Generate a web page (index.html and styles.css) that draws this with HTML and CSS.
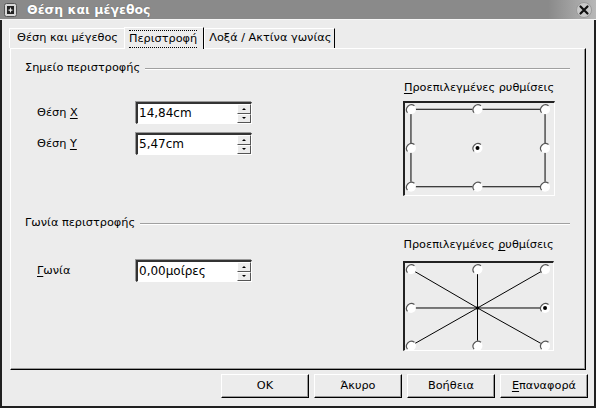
FILE: index.html
```html
<!DOCTYPE html>
<html lang="el">
<head>
<meta charset="utf-8">
<title>Θέση και μέγεθος</title>
<link rel="stylesheet" href="styles.css">
</head>
<body>
<div class="window">
  <div class="titlebar">
    <span class="app-icon"><svg width="13" height="14" viewBox="0 0 13 14"><rect x="0.5" y="0.5" width="12" height="13" rx="2" fill="#d8d8d8" stroke="#555"/><rect x="3" y="3" width="7" height="8" fill="#222"/><path d="M6.5 4 L7.3 6.5 L9.5 7 L7.3 7.7 L6.5 10 L5.7 7.7 L3.5 7 L5.7 6.5 Z" fill="#eee"/></svg></span>
    <span class="title">Θέση και μέγεθος</span>
    <span class="close"><svg width="18" height="18" viewBox="0 0 18 18"><circle cx="9" cy="9" r="7.5" fill="#c9c9c9" stroke="#9a9a9a"/><path d="M5.5 5.5 L12.5 12.5 M12.5 5.5 L5.5 12.5" stroke="#111" stroke-width="2.2" stroke-linecap="round"/></svg></span>
  </div>

  <div class="tabs">
    <div class="tab first">Θέση και μέγεθος</div>
    <div class="tab active"><span class="focus">Περιστροφή</span></div>
    <div class="tab last">Λοξά / Ακτίνα γωνίας</div>
  </div>

  <div class="panel">
    <div class="section-head first-head"><span>Σημείο περιστροφής</span><i class="rule"></i></div>
    <div class="section-row row1">
      <div class="fields">
        <div class="field">
          <span class="label">Θέση <u>X</u></span>
          <span class="spin"><span class="value">14,84cm</span><span class="arrows"><b class="up"></b><b class="down"></b></span></span>
        </div>
        <div class="field">
          <span class="label">Θέση <u>Y</u></span>
          <span class="spin"><span class="value">5,47cm</span><span class="arrows"><b class="up"></b><b class="down"></b></span></span>
        </div>
      </div>
      <div class="preset">
        <div class="preset-label"><u>Π</u>ροεπιλεγμένες ρυθμίσεις</div>
        <div class="ctl ctl1">
          <svg width="150" height="93" viewBox="0 0 150 93">
            <path d="M6 6 H141 V84 H6 Z" fill="none" stroke="#000"/>
            <g class="radio"><circle cx="6" cy="6" r="5"/><path d="M2.5 9.5 A5 5 0 0 1 9.5 2.5"/></g>
            <g class="radio"><circle cx="73" cy="6" r="5"/><path d="M69.5 9.5 A5 5 0 0 1 76.5 2.5"/></g>
            <g class="radio"><circle cx="141" cy="6" r="5"/><path d="M137.5 9.5 A5 5 0 0 1 144.5 2.5"/></g>
            <g class="radio"><circle cx="6" cy="45" r="5"/><path d="M2.5 48.5 A5 5 0 0 1 9.5 41.5"/></g>
            <g class="radio"><circle cx="73" cy="45" r="5"/><path d="M69.5 48.5 A5 5 0 0 1 76.5 41.5"/><circle class="dot" cx="73" cy="45" r="2"/></g>
            <g class="radio"><circle cx="141" cy="45" r="5"/><path d="M137.5 48.5 A5 5 0 0 1 144.5 41.5"/></g>
            <g class="radio"><circle cx="6" cy="84" r="5"/><path d="M2.5 87.5 A5 5 0 0 1 9.5 80.5"/></g>
            <g class="radio"><circle cx="73" cy="84" r="5"/><path d="M69.5 87.5 A5 5 0 0 1 76.5 80.5"/></g>
            <g class="radio"><circle cx="141" cy="84" r="5"/><path d="M137.5 87.5 A5 5 0 0 1 144.5 80.5"/></g>
          </svg>
        </div>
      </div>
    </div>

    <div class="section-head second-head"><span>Γωνία περιστροφής</span><i class="rule"></i></div>
    <div class="section-row row2">
      <div class="fields">
        <div class="field">
          <span class="label"><u>Γ</u>ωνία</span>
          <span class="spin"><span class="value">0,00μοίρες</span><span class="arrows"><b class="up"></b><b class="down"></b></span></span>
        </div>
      </div>
      <div class="preset">
        <div class="preset-label">Προεπιλεγμένες <u>ρ</u>υθμίσεις</div>
        <div class="ctl ctl2">
          <svg width="149" height="88" viewBox="0 0 149 88">
            <g stroke="#000" stroke-width="1">
              <line x1="73" y1="45" x2="6" y2="6"/>
              <line x1="73" y1="45" x2="73" y2="6"/>
              <line x1="73" y1="45" x2="141" y2="6"/>
              <line x1="73" y1="45" x2="6" y2="45"/>
              <line x1="73" y1="45" x2="141" y2="45"/>
              <line x1="73" y1="45" x2="6" y2="83"/>
              <line x1="73" y1="45" x2="73" y2="83"/>
              <line x1="73" y1="45" x2="141" y2="83"/>
            </g>
            <circle cx="73" cy="45" r="1.8" fill="#000"/>
            <g class="radio"><circle cx="6" cy="6" r="5"/><path d="M2.5 9.5 A5 5 0 0 1 9.5 2.5"/></g>
            <g class="radio"><circle cx="73" cy="6" r="5"/><path d="M69.5 9.5 A5 5 0 0 1 76.5 2.5"/></g>
            <g class="radio"><circle cx="141" cy="6" r="5"/><path d="M137.5 9.5 A5 5 0 0 1 144.5 2.5"/></g>
            <g class="radio"><circle cx="6" cy="45" r="5"/><path d="M2.5 48.5 A5 5 0 0 1 9.5 41.5"/></g>
            <g class="radio"><circle cx="141" cy="45" r="5"/><path d="M137.5 48.5 A5 5 0 0 1 144.5 41.5"/><circle class="dot" cx="141" cy="45" r="2"/></g>
            <g class="radio"><circle cx="6" cy="83" r="5"/><path d="M2.5 86.5 A5 5 0 0 1 9.5 79.5"/></g>
            <g class="radio"><circle cx="73" cy="83" r="5"/><path d="M69.5 86.5 A5 5 0 0 1 76.5 79.5"/></g>
            <g class="radio"><circle cx="141" cy="83" r="5"/><path d="M137.5 86.5 A5 5 0 0 1 144.5 79.5"/></g>
          </svg>
        </div>
      </div>
    </div>
  </div>

  <div class="buttons">
    <button class="btn">OK</button>
    <button class="btn">Άκυρο</button>
    <button class="btn">Βοήθεια</button>
    <button class="btn"><u>Ε</u>παναφορά</button>
  </div>
</div>
</body>
</html>
```

FILE: styles.css
```css
* { box-sizing: border-box; }

html, body {
  margin: 0;
  padding: 0;
  width: 596px;
  height: 408px;
  overflow: hidden;
  background: #ececec;
}

body {
  font-family: "DejaVu Sans", "Liberation Sans", sans-serif;
  font-size: 11.3px;
  line-height: 14px;
  color: #000;
}

u { text-decoration: underline; text-underline-offset: 2px; }

.window {
  width: 596px;
  height: 408px;
  border-left: 2px solid #202020;
  border-right: 2px solid #202020;
  border-bottom: 2px solid #202020;
  display: flex;
  flex-direction: column;
  background: #ececec;
}

.titlebar {
  height: 20px;
  margin: 0 -2px;
  background: linear-gradient(to right, #8a8a8a 0, #8a8a8a 92%, #b8b8b8 100%);
  border-bottom: 1px solid #f6f6f6;
  display: flex;
  align-items: center;
  padding-left: 4px;
  padding-right: 3px;
}

.app-icon { display: flex; width: 14px; height: 14px; }

.title {
  margin-left: 9px;
  font-size: 12.5px;
  font-weight: bold;
  color: #fff;
  text-shadow: 0 0 1px #555;
}

.close { margin-left: auto; display: flex; }

.tabs {
  display: flex;
  align-items: flex-end;
  height: 28px;
  padding-left: 7px;
}

.tab {
  height: 20px;
  padding: 0 4px 0 7px;
  border-left: 1px solid #fff;
  border-top: 1px solid #fff;
  border-right: 1px solid #000;
  line-height: 18px;
  white-space: nowrap;
}

.tab.first { border-right: none; padding-right: 6px; }
.tab.last { padding-left: 4px; padding-right: 3px; }

.tab.active {
  height: 22px;
  padding: 1px 6px 0 4px;
  margin-bottom: -1px;
  background: #ececec;
  position: relative;
  z-index: 1;
}

.focus {
  display: inline-block;
  line-height: 16px;
  border-top: 1px dotted #000;
  border-bottom: 1px dotted #000;
  margin-top: 1px;
}

.panel {
  margin: 0 8px 0 8px;
  height: 322px;
  border-left: 1px solid #fff;
  border-top: 1px solid #fff;
  border-right: 1px solid #000;
  border-bottom: 1px solid #000;
  box-shadow: inset -1px -1px 0 #9a9a9a;
  padding: 0 15px 0 14px;
  display: flex;
  flex-direction: column;
}

.section-head {
  display: flex;
  align-items: center;
  height: 14px;
  white-space: nowrap;
}

.first-head { margin-top: 12px; }
.second-head { margin-top: 20px; }

.rule {
  flex: 1;
  height: 2px;
  margin-left: 5px;
  margin-top: 1px;
  border-top: 1px solid #a0a0a0;
  border-bottom: 1px solid #fff;
}

.section-row {
  display: flex;
  justify-content: space-between;
}

.fields {
  display: flex;
  flex-direction: column;
  gap: 9px;
  padding-left: 12px;
}

.row1 .fields { padding-top: 27px; }
.row2 .fields { padding-top: 30px; }

.field {
  display: flex;
  align-items: center;
  height: 22px;
}

.label { width: 99px; }

.spin {
  display: flex;
  width: 116px;
  height: 22px;
  background: #fff;
  border-top: 2px solid #333;
  border-left: 2px solid #333;
  border-right: 1px solid #fff;
  border-bottom: 1px solid #fff;
  box-shadow: -1px -1px 0 #9a9a9a;
}

.value {
  flex: 1;
  padding-left: 1px;
  line-height: 19px;
  font-size: 12px;
}

.arrows {
  width: 14px;
  display: flex;
  flex-direction: column;
  background: #ececec;
}

.arrows b {
  flex: 1;
  display: flex;
  align-items: center;
  justify-content: center;
  border-top: 1px solid #fff;
  border-left: 1px solid #fff;
  border-right: 1px solid #555;
  border-bottom: 1px solid #555;
}

.arrows b::after {
  content: "";
  width: 0;
  height: 0;
  border-left: 2px solid transparent;
  border-right: 2px solid transparent;
}

.arrows .up::after { border-bottom: 2px solid #000; }
.arrows .down::after { border-top: 2px solid #000; }

.preset {
  width: 167px;
  display: flex;
  flex-direction: column;
  align-items: center;
}

.row1 .preset { padding-top: 6px; padding-right: 15px; }
.row2 .preset { padding-top: 8px; padding-right: 16px; }

.preset-label {
  height: 14px;
  white-space: nowrap;
  margin-bottom: 6px;
}

.row2 .preset-label { margin-bottom: 9px; }

.ctl {
  border-top: 2px solid #222;
  border-left: 2px solid #222;
  border-right: 1px solid #fff;
  border-bottom: 1px solid #fff;
  display: flex;
}

.ctl1 { width: 152px; height: 95px; }
.ctl2 { width: 151px; height: 90px; }

.radio circle { fill: #fff; }
.radio path { fill: none; stroke: #555; stroke-width: 1.2; }
.radio .dot { fill: #000; }

.buttons {
  display: flex;
  justify-content: flex-end;
  gap: 5px;
  padding: 4px 6px 0 0;
}

.btn {
  width: 88px;
  height: 24px;
  font: inherit;
  font-size: 11.3px;
  color: #000;
  background: #ececec;
  border-top: 1px solid #fff;
  border-left: 1px solid #fff;
  border-right: 1px solid #000;
  border-bottom: 1px solid #000;
  box-shadow: inset -1px -1px 0 #9a9a9a;
  padding: 0;
  margin: 0;
}
```
